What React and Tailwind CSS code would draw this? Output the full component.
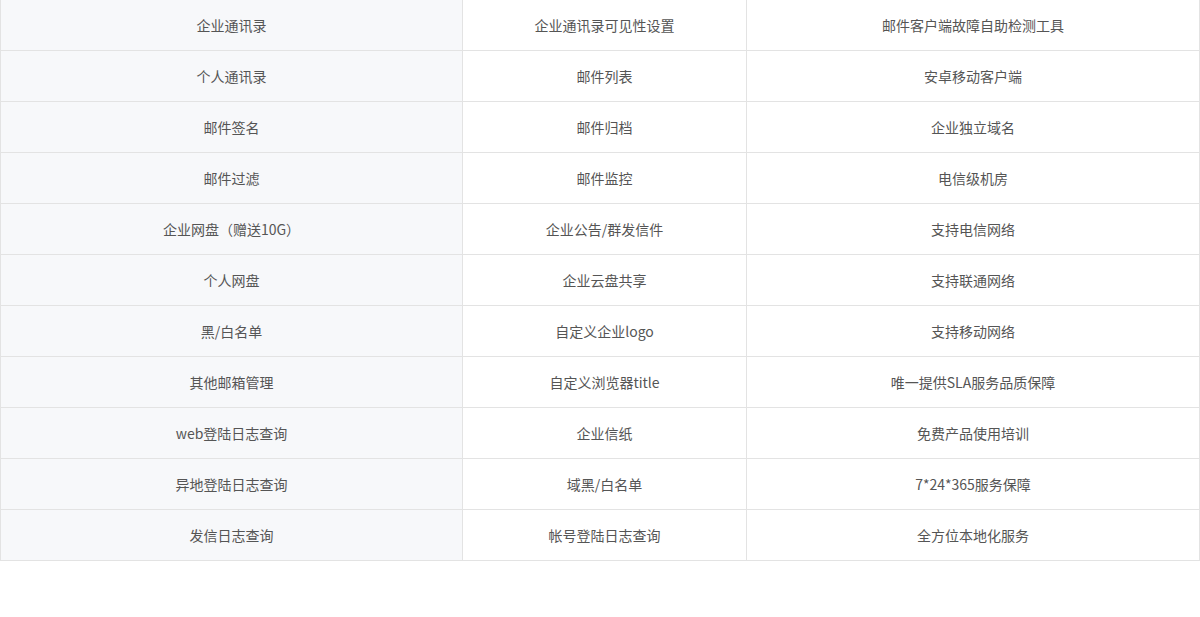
const rows = [
  ["企业通讯录", "企业通讯录可见性设置", "邮件客户端故障自助检测工具"],
  ["个人通讯录", "邮件列表", "安卓移动客户端"],
  ["邮件签名", "邮件归档", "企业独立域名"],
  ["邮件过滤", "邮件监控", "电信级机房"],
  ["企业网盘（赠送10G）", "企业公告/群发信件", "支持电信网络"],
  ["个人网盘", "企业云盘共享", "支持联通网络"],
  ["黑/白名单", "自定义企业logo", "支持移动网络"],
  ["其他邮箱管理", "自定义浏览器title", "唯一提供SLA服务品质保障"],
  ["web登陆日志查询", "企业信纸", "免费产品使用培训"],
  ["异地登陆日志查询", "域黑/白名单", "7*24*365服务保障"],
  ["发信日志查询", "帐号登陆日志查询", "全方位本地化服务"],
];

export default function App() {
  return (
    <div
      className="w-[1200px] h-[617px] bg-white text-[14px] text-[#555555]"
      style={{ fontFamily: '"Microsoft YaHei", "Noto Sans CJK SC", "Liberation Sans", sans-serif' }}
    >
      <div className="border-l border-r border-[#e3e3e3]">
        {rows.map((r, i) => (
          <div key={i} className="flex h-[51px] border-b border-[#e3e3e3]">
            <div className="w-[462px] shrink-0 bg-[#f7f8fa] border-r border-[#e3e3e3] flex items-center justify-center">
              {r[0]}
            </div>
            <div className="w-[284px] shrink-0 border-r border-[#e3e3e3] flex items-center justify-center">
              {r[1]}
            </div>
            <div className="flex-1 flex items-center justify-center">{r[2]}</div>
          </div>
        ))}
      </div>
    </div>
  );
}
